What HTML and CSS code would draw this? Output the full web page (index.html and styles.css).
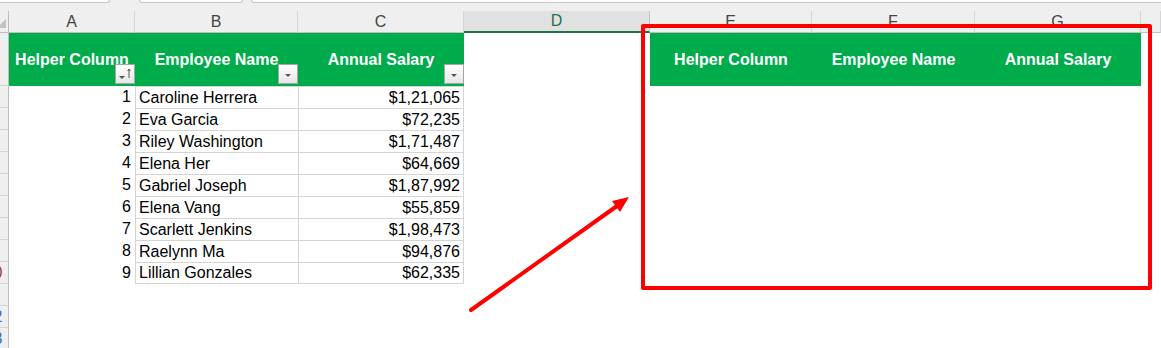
FILE: index.html
```html
<!DOCTYPE html>
<html lang="en">
<head>
  <meta charset="UTF-8" />
  <title>Employee Salaries</title>
  <link rel="stylesheet" href="styles.css">
</head>
<body>

  <div class="topbar">
    <span class="box box-name"></span>
    <span class="box box-mid"></span>
    <span class="box box-formula"></span>
  </div>

  <div class="sheet">
    <div class="row colheads">
      <div class="corner"></div>
      <div class="colhead">A</div>
      <div class="colhead">B</div>
      <div class="colhead">C</div>
      <div class="colhead is-active">D</div>
      <div class="colhead">E</div>
      <div class="colhead">F</div>
      <div class="colhead">G</div>
      <div class="colhead"></div>
    </div>

    <div class="row head-row">
      <div class="rowhead"></div>
      <div class="th">Helper Column
        <span class="filter">
          <svg viewBox="0 0 18 18" width="18" height="18"><path d="M3 11h6l-3 3z" fill="#555"/><path d="M13 4v9M11.6 6L13 4l1.4 2" stroke="#555" stroke-width="1" fill="none"/></svg>
        </span>
      </div>
      <div class="th">Employee Name
        <span class="filter">
          <svg viewBox="0 0 18 18" width="18" height="18"><path d="M6 9h6l-3 3z" fill="#555"/></svg>
        </span>
      </div>
      <div class="th">Annual Salary
        <span class="filter">
          <svg viewBox="0 0 18 18" width="18" height="18"><path d="M6 9h6l-3 3z" fill="#555"/></svg>
        </span>
      </div>
      <div class="cell"></div>
      <div class="th">Helper Column</div>
      <div class="th">Employee Name</div>
      <div class="th">Annual Salary</div>
      <div class="cell"></div>
    </div>

    <div class="row"><div class="rowhead"></div><div class="cell num">1</div><div class="cell name">Caroline Herrera</div><div class="cell amount">$1,21,065</div></div>
    <div class="row"><div class="rowhead"></div><div class="cell num">2</div><div class="cell name">Eva Garcia</div><div class="cell amount">$72,235</div></div>
    <div class="row"><div class="rowhead"></div><div class="cell num">3</div><div class="cell name">Riley Washington</div><div class="cell amount">$1,71,487</div></div>
    <div class="row"><div class="rowhead"></div><div class="cell num">4</div><div class="cell name">Elena Her</div><div class="cell amount">$64,669</div></div>
    <div class="row"><div class="rowhead"></div><div class="cell num">5</div><div class="cell name">Gabriel Joseph</div><div class="cell amount">$1,87,992</div></div>
    <div class="row"><div class="rowhead"></div><div class="cell num">6</div><div class="cell name">Elena Vang</div><div class="cell amount">$55,859</div></div>
    <div class="row"><div class="rowhead"></div><div class="cell num">7</div><div class="cell name">Scarlett Jenkins</div><div class="cell amount">$1,98,473</div></div>
    <div class="row"><div class="rowhead"></div><div class="cell num">8</div><div class="cell name">Raelynn Ma</div><div class="cell amount">$94,876</div></div>
    <div class="row last"><div class="rowhead"><span class="warm">10</span></div><div class="cell num">9</div><div class="cell name">Lillian Gonzales</div><div class="cell amount">$62,335</div></div>

    <div class="row"><div class="rowhead"></div></div>
    <div class="row"><div class="rowhead"><span class="filtered">12</span></div></div>
    <div class="row"><div class="rowhead"><span class="filtered">13</span></div></div>
  </div>

  <!-- callout box and arrow drawn over the sheet -->
  <div class="callout"></div>
  <svg class="pointer" width="1161" height="348" viewBox="0 0 1161 348">
    <line x1="471" y1="310" x2="617" y2="206" stroke="#ff0000" stroke-width="4" stroke-linecap="round"/>
    <polygon points="629,197 612,201 620,212" fill="#ff0000"/>
  </svg>

</body>
</html>
```

FILE: styles.css
```css
* {
  box-sizing: border-box;
}

body {
  margin: 0;
  width: 1161px;
  height: 348px;
  overflow: hidden;
  position: relative;
  background: #fff;
  color: #000;
  font-family: "Liberation Sans", Arial, sans-serif;
  font-size: 16px;
}

/* name box / formula bar edges */
.topbar {
  display: flex;
  height: 11px;
  background: #efefef;
}

.box {
  height: 3px;
  background: #fff;
  border: 1px solid #c6c6c6;
  border-top: 0;
  border-radius: 0 0 4px 4px;
}

.box-name {
  width: 110px;
  border-left: 0;
  border-bottom-left-radius: 0;
}

.box-mid {
  width: 104px;
  margin-left: 29px;
}

.box-formula {
  flex: 1;
  margin-left: 8px;
  border-right: 0;
  border-bottom-right-radius: 0;
}

/* grid */
.row {
  display: grid;
  grid-template-columns: 9px 126px 163px 166px 186px 162px 163px 166px 1fr;
  height: 22px;
}

.colheads {
  background: #efefef;
}

.corner {
  position: relative;
  border-right: 1px solid #bdbdbd;
  border-bottom: 1px solid #bfbfbf;
  overflow: hidden;
}

.corner::after {
  content: "";
  position: absolute;
  right: 2px;
  bottom: 4px;
  border-style: solid;
  border-width: 0 0 9px 9px;
  border-color: transparent transparent #c2c2c2 transparent;
}

.colhead {
  display: flex;
  align-items: center;
  justify-content: center;
  color: #444;
  border-right: 1px solid #d6d6d6;
  border-bottom: 1px solid #bfbfbf;
}

.colhead.is-active {
  background: #e1e1e1;
  color: #217346;
  border-right-color: #c4c4c4;
  border-bottom: 2px solid #217346;
}

/* row numbers are scrolled, only their right edge shows */
.rowhead {
  display: flex;
  align-items: center;
  overflow: hidden;
  background: #efefef;
  color: #444;
  border-right: 1px solid #bdbdbd;
  border-bottom: 1px solid #d4d4d4;
}

.rowhead span {
  flex: none;
  width: 27px;
  margin-left: -20px;
  text-align: center;
}

.rowhead .warm {
  color: #8a4a36;
}

.rowhead .filtered {
  color: #3a6fc0;
}

/* table header row */
.head-row {
  height: 53px;
}

.th {
  position: relative;
  display: flex;
  align-items: center;
  justify-content: center;
  background: #00ab4b;
  color: #fff;
  font-weight: bold;
  white-space: nowrap;
}

.filter {
  position: absolute;
  right: 0;
  bottom: 2px;
  width: 20px;
  height: 20px;
  display: flex;
  border: 1px solid #a6a6a6;
  background: linear-gradient(#ffffff, #e6e6e6);
}

/* data cells */
.cell {
  display: flex;
  align-items: center;
  white-space: nowrap;
}

.num {
  justify-content: flex-end;
  padding-right: 4px;
}

.name {
  padding-left: 3px;
  border-left: 1px solid #d4d4d4;
  border-top: 1px solid #d4d4d4;
}

.amount {
  justify-content: flex-end;
  padding-right: 3px;
  border-left: 1px solid #d4d4d4;
  border-right: 1px solid #d4d4d4;
  border-top: 1px solid #d4d4d4;
}

.last .name,
.last .amount {
  border-bottom: 1px solid #d4d4d4;
}

/* annotation */
.callout {
  position: absolute;
  left: 641px;
  top: 24px;
  width: 511px;
  height: 266px;
  border: 4px solid #ff0000;
  border-radius: 2px;
}

.pointer {
  position: absolute;
  left: 0;
  top: 0;
  pointer-events: none;
}
```
